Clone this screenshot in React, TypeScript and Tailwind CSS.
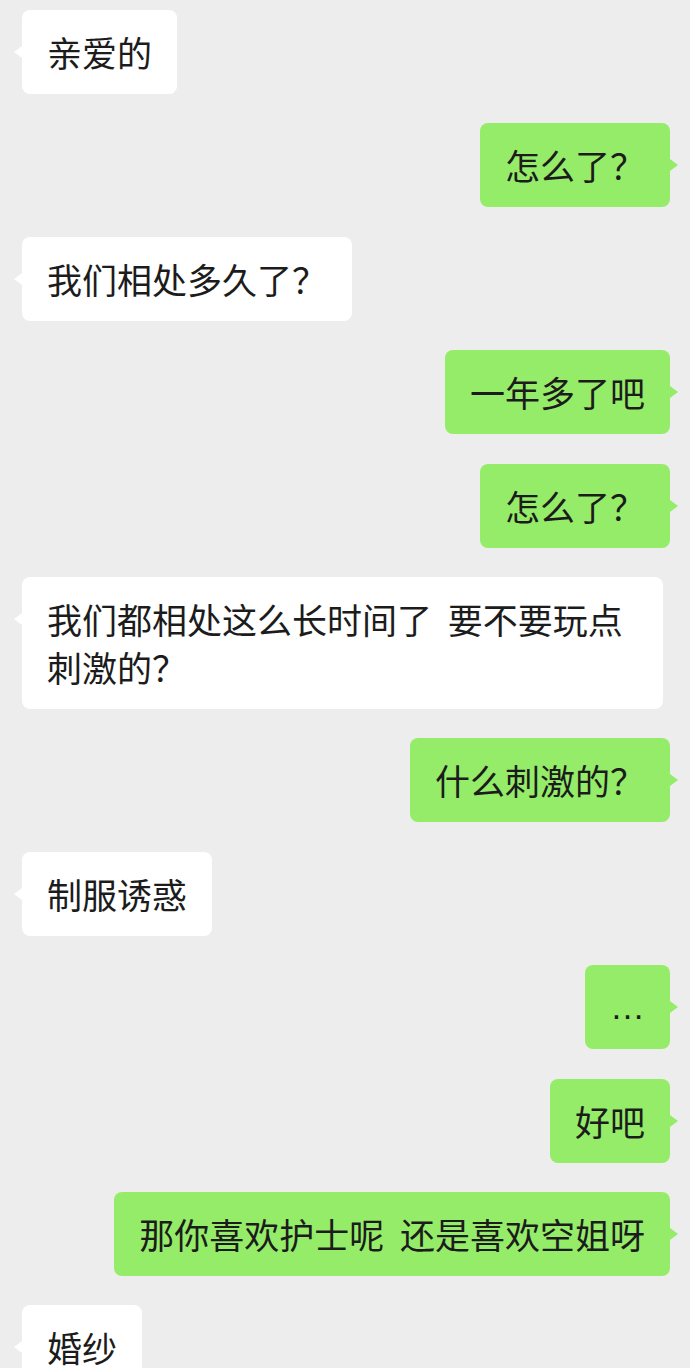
import React from "react";

type Side = "left" | "right";

function Bubble({ side, children }: { side: Side; children: React.ReactNode }) {
  const left = side === "left";
  return (
    <div className={left ? "flex justify-start pl-[22px]" : "flex justify-end pr-[20px]"}>
      <div
        className={
          left
            ? "relative max-w-[641px] rounded-[8px] bg-white px-[25px] py-[18px] text-[35px] leading-[48px] text-[#1c1c1c]"
            : "relative max-w-[641px] rounded-[8px] bg-[#95ec69] px-[25px] py-[18px] text-[35px] leading-[48px] text-[#1c1c1c]"
        }
      >
        {left ? (
          <span className="absolute left-[-8px] top-[36px] h-0 w-0 border-y-[6px] border-r-[8px] border-y-transparent border-r-white" />
        ) : (
          <span className="absolute right-[-8px] top-[36px] h-0 w-0 border-y-[6px] border-l-[8px] border-y-transparent border-l-[#95ec69]" />
        )}
        {children}
      </div>
    </div>
  );
}

export default function App() {
  return (
    <div
      className="flex h-[1368px] w-[690px] flex-col gap-[29.4px] overflow-hidden bg-[#ededed] pt-[10px]"
      style={{ fontFamily: '"Noto Sans CJK SC", "Noto Sans", sans-serif' }}
    >
      <Bubble side="left">亲爱的</Bubble>
      <Bubble side="right">怎么了？</Bubble>
      <Bubble side="left">我们相处多久了？</Bubble>
      <Bubble side="right">一年多了吧</Bubble>
      <Bubble side="right">怎么了？</Bubble>
      <Bubble side="left">
        <span className="[word-spacing:8px]">我们都相处这么长时间了 要不要玩点刺激的？</span>
      </Bubble>
      <Bubble side="right">什么刺激的？</Bubble>
      <Bubble side="left">制服诱惑</Bubble>
      <Bubble side="right">
        <div className="h-[48px] w-[35px] text-[35px] leading-[48px]" style={{ fontFamily: '"Liberation Sans", sans-serif' }}>
          …
        </div>
      </Bubble>
      <Bubble side="right">好吧</Bubble>
      <Bubble side="right">
        <span className="[word-spacing:8px]">那你喜欢护士呢 还是喜欢空姐呀</span>
      </Bubble>
      <Bubble side="left">婚纱</Bubble>
    </div>
  );
}
